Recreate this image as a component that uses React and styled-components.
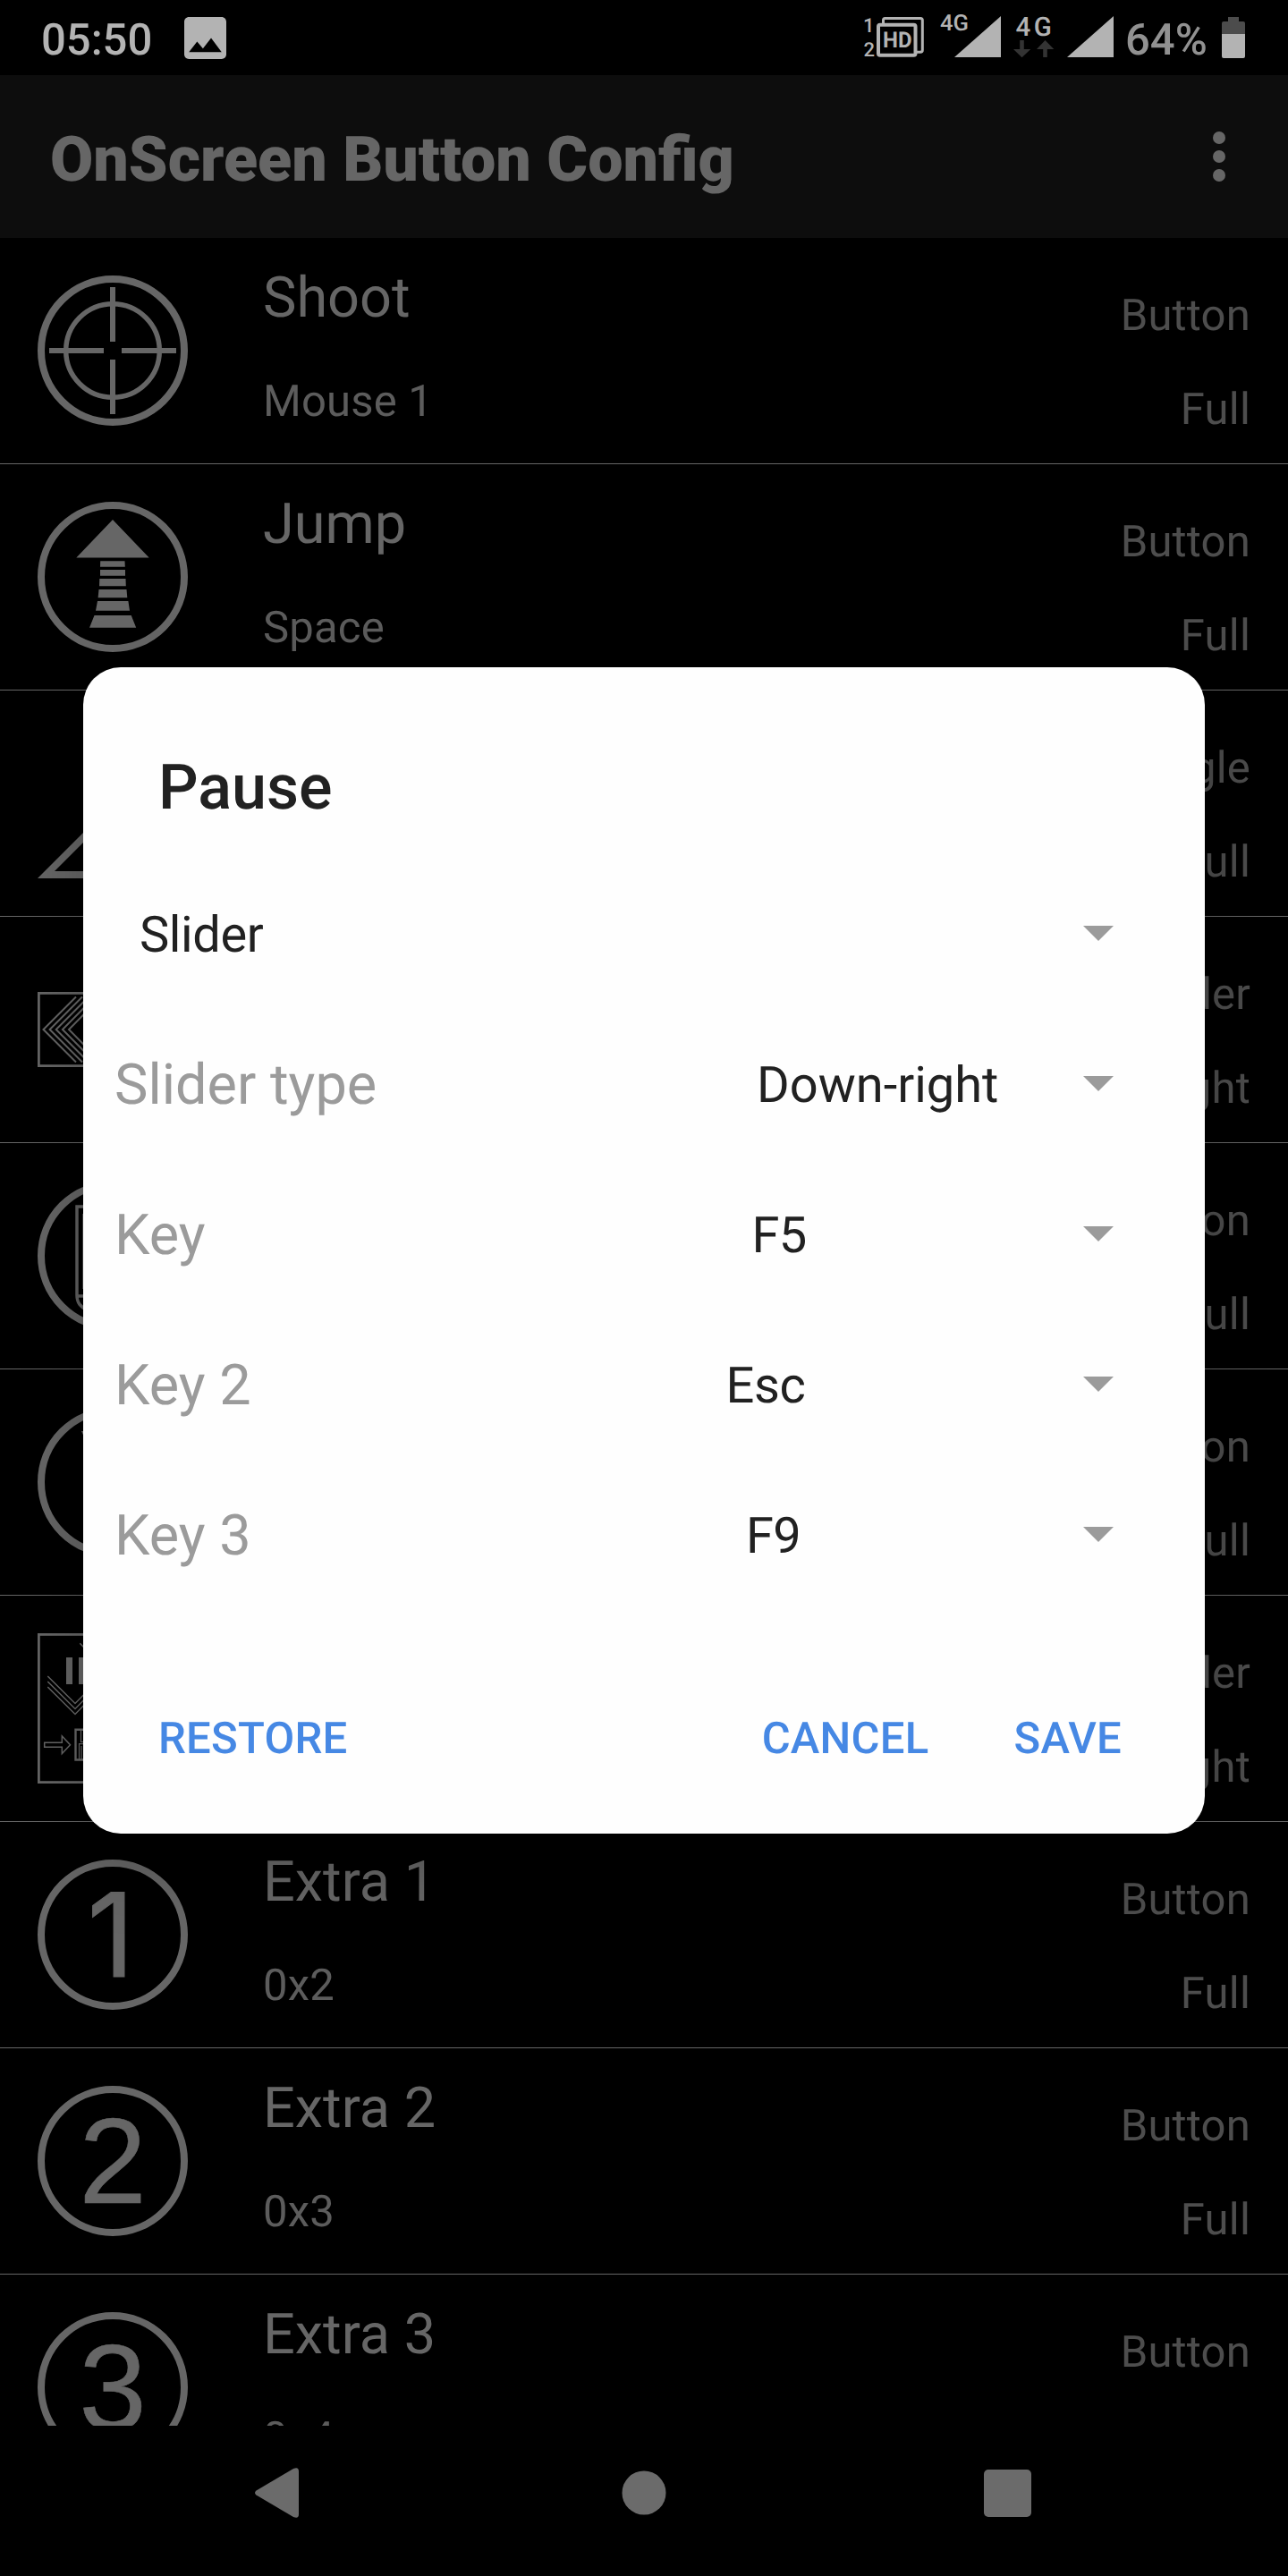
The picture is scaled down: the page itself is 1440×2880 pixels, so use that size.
import React from "react";
import styled, { createGlobalStyle } from "styled-components";

const GlobalStyle = createGlobalStyle`
  * { box-sizing: border-box; }
  body { margin: 0; background: #000; }
`;

const Screen = styled.div`
  position: relative;
  display: flex;
  flex-direction: column;
  width: 1440px;
  height: 2880px;
  overflow: hidden;
  background: #000;
  font-family: Roboto, "Liberation Sans", sans-serif;
  text-rendering: geometricPrecision;
`;

const StatusBar = styled.header`
  display: flex;
  align-items: center;
  flex: 0 0 84px;
  padding: 0 48px 0 46px;
  color: #b3b3b3;
`;

const Clock = styled.span`
  width: 160px;
  padding-top: 5px;
  font-size: 49px;
  font-weight: 500;
  line-height: 58px;
`;

const StatusSvg = styled.svg`
  display: block;
  margin-left: ${(p) => p.$gap || 0}px;
  font-family: Roboto, sans-serif;
  font-weight: 500;
  fill: #b3b3b3;
`;

const StatusRight = styled.div`
  display: flex;
  align-items: center;
  margin-left: auto;
`;

const BatteryLevel = styled.span`
  width: 108px;
  padding: 5px 0 0 11px;
  font-size: 49px;
  font-weight: 500;
  line-height: 58px;
  color: #919191;
  white-space: nowrap;
`;

const AppBar = styled.div`
  display: flex;
  align-items: center;
  justify-content: space-between;
  flex: 0 0 182px;
  padding: 0 70px 0 56px;
  background: #0d0d0d;
`;

const AppTitle = styled.h1`
  margin: 0;
  padding-top: 8px;
  font-size: 70px;
  font-weight: 900;
  line-height: 82px;
  color: #666;
`;

const Overflow = styled.div`
  display: flex;
  flex-direction: column;
  gap: 7px;
`;

const Dot = styled.i`
  width: 14px;
  height: 14px;
  border-radius: 50%;
  background: #666;
`;

const List = styled.main`
  flex: 1 1 0;
  min-height: 0;
  overflow: hidden;
`;

const Row = styled.div`
  display: flex;
  height: 253px;
  padding: 0 42px;
  border-bottom: 1px solid #666;
`;

const RowIcon = styled.svg`
  flex: 0 0 168px;
  height: 168px;
  margin-top: 42px;
  fill: #666;
`;

const RowText = styled.div`
  flex: 1;
  padding: 26px 0 0 84px;
`;

const RowTitle = styled.div`
  height: 84px;
  font-size: 63px;
  line-height: 84px;
  color: #666;
`;

const RowKey = styled.div`
  margin-top: 40px;
  font-size: 49px;
  line-height: 66px;
  letter-spacing: 0.2px;
  color: #5c5c5c;
`;

const RowMeta = styled.div`
  padding-top: 54px;
  text-align: right;
  font-size: 49px;
  line-height: 66px;
  letter-spacing: 0.2px;
  color: #4d4d4d;
`;

const MetaLine = styled.div`
  height: 105px;
`;

const NavBar = styled.nav`
  display: flex;
  align-items: center;
  flex: 0 0 168px;
  padding: 0 287.5px 18px 285px;
  justify-content: space-between;
`;

const NavIcon = styled.svg`
  margin-left: ${(p) => p.$nudge || 0}px;
  fill: #6b6b6b;
`;

const Dialog = styled.section`
  position: absolute;
  top: 746px;
  left: 93px;
  display: flex;
  flex-direction: column;
  width: 1254px;
  height: 1304px;
  border-radius: 42px;
  background: #fefefe;
  box-shadow: 0 28px 84px rgba(0, 0, 0, 0.26);
  color: #212121;
`;

const DialogTitle = styled.h2`
  margin: 0;
  padding: 94px 84px 0;
  height: 214px;
  font-size: 70px;
  font-weight: 500;
  line-height: 82px;
`;

const Field = styled.div`
  display: flex;
  align-items: center;
  height: 168px;
  padding: 2px 102px 0 ${(p) => p.$inset}px;
`;

const FieldLabel = styled.span`
  padding-top: 2px;
  font-size: 63px;
  line-height: 84px;
  color: #9b9b9b;
`;

const Spinner = styled.div`
  display: flex;
  align-items: center;
  justify-content: space-between;
  width: ${(p) => p.$width}px;
  margin-left: auto;
  font-size: 56px;
  line-height: 74px;
  letter-spacing: ${(p) => p.$tracking || 0}px;
`;

const Caret = styled.i`
  margin-bottom: 3px;
  border: 17px solid transparent;
  border-top-color: #9b9b9b;
  border-bottom-width: 0;
`;

const Actions = styled.div`
  display: flex;
  align-items: center;
  height: 126px;
  margin-top: 81px;
  padding: 0 93px 0 84px;
`;

const Action = styled.button`
  margin: 0 0 0 ${(p) => p.$gap || "0"};
  padding: 0;
  border: 0;
  background: none;
  font: 500 49px/66px Roboto, sans-serif;
  letter-spacing: 0.25px;
  text-rendering: geometricPrecision;
  color: #4688e4;
`;

const ring = <circle cx="84" cy="84" r="80" fill="none" stroke="#666" strokeWidth="8" />;

function Digit({ value, family, size, x = 84, weight = 0.6 }) {
  return (
    <>
      {ring}
      <text
        x={x}
        y="131"
        textAnchor="middle"
        fontSize={size}
        fontFamily={`${family}, sans-serif`}
        stroke="#666"
        strokeWidth={weight}
      >
        {value}
      </text>
    </>
  );
}

const icons = {
  aim: (
    <>
      {ring}
      <circle cx="84" cy="84" r="52.3" fill="none" stroke="#666" strokeWidth="5.5" />
      <path d="M13 81h61v6H13zM94 81h61v6H94zM81 13h6v61h-6zM81 94h6v61h-6z" />
    </>
  ),
  jump: (
    <>
      {ring}
      <path d="M84 20L124.7 62.6H43.3zM70.2 66.3h27.3l.3 6.4H70zM70 76h28v6.7H70zM69.3 86h29.2l.3 8.3H69zM68.5 98h31l.8 9.2H67.6zM67 111h34.4l1.6 10.7H65zM63.5 127h41.2l5.5 13.7H58z" />
    </>
  ),
  triangle: <path d="M0 168L84 84l84 84zM19 160h130L84 95z" fillRule="evenodd" />,
  slider: (
    <g fill="none" stroke="#666">
      <rect x="1.4" y="43.4" width="165.2" height="81.2" strokeWidth="2.8" />
      <path
        strokeWidth="2"
        d="M43 47.5L6.5 84L43 120.5M50 47.5L13.6 84L50 120.5M57 47.5L20.7 84L57 120.5M64 47.5L27.9 84L64 120.5M71 47.5L35 84L71 120.5"
      />
    </g>
  ),
  book: (
    <>
      {ring}
      <path
        fill="none"
        stroke="#606060"
        strokeWidth="3.5"
        d="M60 29H44V128C44 137 48 141 56 145M44 129H60"
      />
      <path fill="none" stroke="#444" strokeWidth="1" d="M50.5 37V121" />
    </>
  ),
  tool: (
    <>
      {ring}
      <path d="M49 27L55 40V27z" />
    </>
  ),
  pause: (
    <>
      <rect x="1.4" y="1.4" width="165.2" height="165.2" fill="none" stroke="#666" strokeWidth="2.8" />
      <path d="M32 27h7v30h-7zM46 27h7v30h-7z" />
      <g fill="none" stroke="#666" strokeWidth="1.5">
        <path d="M47.3 11.3L60 24M11.3 48L42 78.5L72 48M11.3 54L42 84.5L72 54M11.3 60L42 90.5L72 60" />
        <path d="M7.7 122.2H27.3V115L36.5 124.7L27.3 134.5V127.3H7.7z" />
        <path strokeWidth="2.4" d="M60 107.7H42.5V141.5H60" />
        <path strokeWidth="1.2" d="M48.5 109V121.5H60M46.5 141V123.7H60M49 141V126" />
      </g>
    </>
  ),
  one: <Digit value="1" family="Inter" size={130} x={82} weight={1} />,
  two: <Digit value="2" family="Liberation Sans" size={136} />,
  three: <Digit value="3" family="Liberation Sans" size={136} />,
};

const rows = [
  { icon: "aim", title: "Shoot", keyName: "Mouse 1", type: "Button", size: "Full" },
  { icon: "jump", title: "Jump", keyName: "Space", type: "Button", size: "Full" },
  { icon: "triangle", type: "Toggle", size: "Full" },
  { icon: "slider", type: "Slider", size: "Right" },
  { icon: "book", type: "Button", size: "Full" },
  { icon: "tool", type: "Button", size: "Full" },
  { icon: "pause", type: "Slider", size: "Right" },
  { icon: "one", title: "Extra 1", keyName: "0x2", type: "Button", size: "Full" },
  { icon: "two", title: "Extra 2", keyName: "0x3", type: "Button", size: "Full" },
  { icon: "three", title: "Extra 3", keyName: "0x4", type: "Button" },
];

const fields = [
  { value: "Slider", width: 1089, inset: 63, tracking: -0.4 },
  { label: "Slider type", value: "Down-right", width: 399, inset: 35 },
  { label: "Key", value: "F5", width: 404.5, inset: 35, tracking: -0.8 },
  { label: "Key 2", value: "Esc", width: 433.5, inset: 35, tracking: -0.4 },
  { label: "Key 3", value: "F9", width: 411, inset: 35, tracking: -0.8 },
];

function Signals() {
  return (
    <StatusSvg width="285" height="84" viewBox="962 0 285 84">
      <text x="965" y="36" fontSize="22">1</text>
      <text x="965.5" y="62.5" fontSize="22">2</text>
      <path
        fill="none"
        stroke="#b3b3b3"
        strokeWidth="3"
        d="M987.5 26V22.5Q987.5 20.5 989.5 20.5H1029Q1031.3 20.5 1031.3 22.5V56Q1031.3 58.3 1029 58.3H1025"
      />
      <rect x="982" y="27.8" width="41.5" height="34" rx="2" fill="none" stroke="#b3b3b3" strokeWidth="4" />
      <text x="987" y="53" fontSize="24.5" fontWeight="700" textLength="32.5" lengthAdjust="spacingAndGlyphs">HD</text>
      <text x="1051" y="34" fontSize="25" textLength="32" lengthAdjust="spacingAndGlyphs">4G</text>
      <path d="M1067 64L1119 18V64z" />
      <text x="1135.5" y="40" fontSize="29.5" letterSpacing="3.5">4G</text>
      <path fill="#333" d="M1140.2 45h4.6v10h7.5L1142.5 64.3L1133 55h7.2zM1166.2 64h4.6V55h7.5L1168.5 45L1159 55h7.2z" />
      <path d="M1193 64L1245 18V64z" />
    </StatusSvg>
  );
}

export default function App() {
  return (
    <Screen>
      <GlobalStyle />
      <StatusBar>
        <Clock>05:50</Clock>
        <StatusSvg width="47" height="47" viewBox="3 3 18 18">
          <path d="M21 19V5c0-1.100-.9-2-2-2H5c-1.100 0-2 .9-2 2v14c0 1.100.9 2 2 2h14c1.100 0 2-.9 2-2zM8.500 13.500l2.500 3.010L14.500 12l4.500 6H5l3.500-4.500z" />
        </StatusSvg>
        <StatusRight>
          <Signals />
          <BatteryLevel>64%</BatteryLevel>
          <StatusSvg $gap={11} width="26" height="46" viewBox="0 0 26 46">
            <path fill="#4c4c4c" d="M0 19V7q0-2 2-2h5V0h12v5h5q2 0 2 2v12z" />
            <path d="M0 19h26v25q0 2-2 2H2q-2 0-2-2z" />
          </StatusSvg>
        </StatusRight>
      </StatusBar>
      <AppBar>
        <AppTitle>OnScreen Button Config</AppTitle>
        <Overflow>
          <Dot />
          <Dot />
          <Dot />
        </Overflow>
      </AppBar>
      <List>
        {rows.map((row) => (
          <Row key={row.icon}>
            <RowIcon viewBox="0 0 168 168">{icons[row.icon]}</RowIcon>
            <RowText>
              <RowTitle>{row.title}</RowTitle>
              <RowKey>{row.keyName}</RowKey>
            </RowText>
            <RowMeta>
              <MetaLine>{row.type}</MetaLine>
              <MetaLine>{row.size}</MetaLine>
            </RowMeta>
          </Row>
        ))}
      </List>
      <NavBar>
        <NavIcon width="50" height="58" viewBox="0 0 50 58">
          <path d="M1.500 26.500L43 2q6-2.500 6 3v48q0 5.500-6 3L1.500 31.500q-3-2.500 0-5z" />
        </NavIcon>
        <NavIcon $nudge={5} width="50" height="50" viewBox="0 0 50 50">
          <circle cx="25" cy="25" r="24.500" />
        </NavIcon>
        <NavIcon width="53" height="53" viewBox="0 0 53 53">
          <rect width="53" height="53" rx="5" />
        </NavIcon>
      </NavBar>
      <Dialog>
        <DialogTitle>Pause</DialogTitle>
        {fields.map((field) => (
          <Field key={field.value} $inset={field.inset}>
            {field.label && <FieldLabel>{field.label}</FieldLabel>}
            <Spinner $width={field.width} $tracking={field.tracking}>
              {field.value}
              <Caret />
            </Spinner>
          </Field>
        ))}
        <Actions>
          <Action>RESTORE</Action>
          <Action $gap="auto">CANCEL</Action>
          <Action $gap="95px">SAVE</Action>
        </Actions>
      </Dialog>
    </Screen>
  );
}
